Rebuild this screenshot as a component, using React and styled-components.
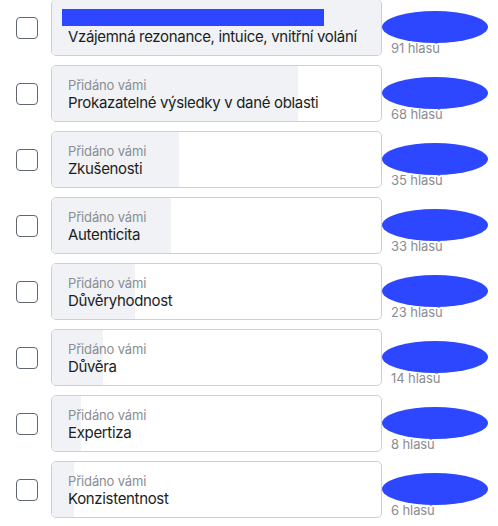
import React from 'react'
import styled, { createGlobalStyle } from 'styled-components'

const Global = createGlobalStyle`
  body {
    margin: 0;
    background: #fff;
    font-family: Inter, "Liberation Sans", sans-serif;
  }
`

const List = styled.ul`
  list-style: none;
  margin: -1px 0 0;
  padding: 0;
  display: flex;
  flex-direction: column;
  gap: 9px;
`

const Row = styled.li`
  display: flex;
  align-items: center;
  padding-left: 16px;
`

const Check = styled.span`
  width: 20px;
  height: 20px;
  border: 1px solid #606770;
  border-radius: 4px;
  flex-shrink: 0;
  margin-right: 13px;
`

const Card = styled.div`
  position: relative;
  width: 329px;
  border: 1px solid #ccd0d5;
  border-radius: 5px;
  overflow: hidden;
  background: #fff;
`

const Fill = styled.div`
  position: absolute;
  left: 0;
  top: 0;
  bottom: 0;
  background: #f0f2f5;
`

const CardBody = styled.div`
  position: relative;
  padding: 11px 16px 8px;
  display: flex;
  flex-direction: column;
  white-space: nowrap;
`

const Meta = styled.span`
  font-size: 13px;
  line-height: 16px;
  letter-spacing: -0.15px;
  color: #8a8d91;
`

const Title = styled.span`
  font-size: 15px;
  line-height: 20px;
  letter-spacing: -0.33px;
  color: #1c1e21;
`

const Redact = styled.div`
  position: absolute;
  left: 10px;
  top: 9px;
  width: 262px;
  height: 17px;
  background: #2c47ff;
`

const Votes = styled.div`
  position: relative;
  margin-left: 9px;
  padding-top: 41px;
  align-self: stretch;
  font-size: 13px;
  line-height: 16px;
  letter-spacing: -0.1px;
  color: #8a8d91;
  white-space: nowrap;
`

const Blob = styled.div`
  position: absolute;
  left: -9px;
  top: 12px;
  width: 106px;
  height: 32px;
  border-radius: 50%;
  background: #2c47ff;
`

const options = [
  ['Vzájemná rezonance, intuice, vnitřní volání', 91],
  ['Prokazatelné výsledky v dané oblasti', 68],
  ['Zkušenosti', 35],
  ['Autenticita', 33],
  ['Důvěryhodnost', 23],
  ['Důvěra', 14],
  ['Expertiza', 8],
  ['Konzistentnost', 6],
]

const max = 91

export default function App() {
  return (
    <>
      <Global />
      <List>
        {options.map(([title, votes], i) => (
          <Row key={title}>
            <Check />
            <Card>
              <Fill style={{ width: `${(votes / max) * 100}%` }} />
              <CardBody>
                <Meta>Přidáno vámi</Meta>
                <Title>{title}</Title>
              </CardBody>
              {i === 0 && <Redact />}
            </Card>
            <Votes>
              {votes} hlasů
              <Blob />
            </Votes>
          </Row>
        ))}
      </List>
    </>
  )
}
